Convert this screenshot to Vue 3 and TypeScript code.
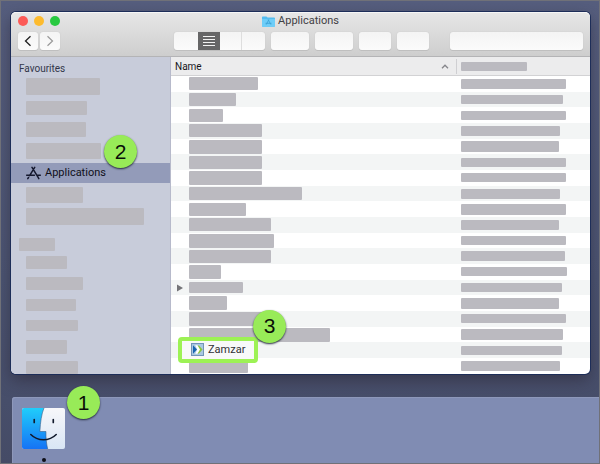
<script setup lang="ts">
interface Bar {
  w: number
  h: number
}
interface FileRow {
  name: Bar | null
  date: Bar
  folder: boolean
}

const favouritesTop: Bar[] = [
  { w: 74, h: 17 },
  { w: 61, h: 14 },
  { w: 60, h: 15 },
  { w: 75, h: 16 },
]
const favouritesBottom: Bar[] = [
  { w: 57, h: 16 },
  { w: 118, h: 17 },
]
const devices: Bar[] = [
  { w: 41, h: 13 },
  { w: 57, h: 13 },
  { w: 50, h: 12 },
  { w: 52, h: 11 },
  { w: 41, h: 14 },
  { w: 52, h: 13 },
]

const row = (nw: number, nh: number, dw: number, dh: number, folder = false): FileRow => ({
  name: nw ? { w: nw, h: nh } : null,
  date: { w: dw, h: dh },
  folder,
})

const files: FileRow[] = [
  row(69, 13, 105, 10),
  row(47, 13, 102, 9),
  row(34, 13, 105, 9),
  row(73, 13, 99, 10),
  row(73, 14, 98, 11),
  row(73, 13, 105, 9),
  row(73, 14, 105, 9),
  row(113, 13, 99, 10),
  row(57, 13, 105, 11),
  row(82, 13, 98, 10),
  row(85, 14, 105, 9),
  row(82, 13, 104, 10),
  row(32, 14, 106, 9),
  row(54, 11, 101, 9, true),
  row(38, 14, 98, 11),
  row(76, 14, 105, 9),
  row(141, 14, 102, 11),
  row(0, 0, 101, 9),
  row(59, 13, 99, 10),
]

const size = (b: Bar) => ({ width: b.w + 'px', height: b.h + 'px' })
</script>

<template>
  <div class="desktop">
    <main class="window">
      <header class="chrome">
        <div class="title-row">
          <div class="lights">
            <button class="light red" aria-label="Close"></button>
            <button class="light amber" aria-label="Minimise"></button>
            <button class="light green" aria-label="Zoom"></button>
          </div>
          <h1 class="title">
            <svg width="13" height="11" viewBox="0 0 13 11" aria-hidden="true">
              <path d="M0 1.2Q0 .4.8.4H4.4L5.6 1.6H12.2Q13 1.6 13 2.4V10Q13 10.8 12.2 10.8H.8Q0 10.8 0 10Z" fill="#55bdf0" />
              <path d="M0 3H13V10Q13 10.8 12.2 10.8H.8Q0 10.8 0 10Z" fill="#6dcdf8" />
              <path d="M6.9 3.5L4.2 8.6M6.1 3.5L8.9 8.6M3.5 7.3H9.5" stroke="#3a9fd3" stroke-width=".8" fill="none" />
            </svg>
            <span>Applications</span>
          </h1>
        </div>
        <div class="toolbar">
          <div class="nav">
            <button class="tool nav-button" aria-label="Back">
              <svg width="8" height="12" viewBox="0 0 8 12"><path d="M6.5 1.2L1.5 6L6.5 10.8" fill="none" stroke="#222" stroke-width="1.3" /></svg>
            </button>
            <button class="tool nav-button" aria-label="Forward">
              <svg width="8" height="12" viewBox="0 0 8 12"><path d="M1.5 1.2L6.5 6L1.5 10.8" fill="none" stroke="#999" stroke-width="1.2" /></svg>
            </button>
          </div>
          <div class="segments">
            <button aria-label="Icon view"></button>
            <button class="on" aria-label="List view">
              <svg width="14" height="10" viewBox="0 0 14 10"><path d="M1 .5H13M1 3.5H13M1 6.5H13M1 9.5H13" stroke="#f2f2f2" stroke-width="1" /></svg>
            </button>
            <button aria-label="Column view"></button>
            <button class="last" aria-label="Gallery view"></button>
          </div>
          <button class="tool wide" aria-label="Group items"></button>
          <button class="tool wide" aria-label="Actions"></button>
          <button class="tool" aria-label="Share"></button>
          <button class="tool" aria-label="Tags"></button>
          <input class="search" type="search" aria-label="Search" />
        </div>
      </header>

      <div class="body">
        <nav class="sidebar">
          <h2>Favourites</h2>
          <ul class="favourites">
            <li v-for="(b, i) in favouritesTop" :key="i"><span class="bar" :style="size(b)"></span></li>
            <li class="selected">
              <a href="#applications">
                <svg width="15" height="14" viewBox="0 0 15 14" aria-hidden="true">
                  <path d="M8.7 1.3L3.6 9.7M6 1.3L12 11.2M.7 9.2H8.4M11 9.2H14.3M2.5 11.5L1.8 12.6M12 11.2L12.8 12.6" fill="none" stroke="#15182e" stroke-width="1.5" stroke-linecap="round" />
                </svg>
                <span>Applications</span>
              </a>
              <span class="badge badge-two">2</span>
            </li>
            <li v-for="(b, i) in favouritesBottom" :key="'b' + i"><span class="bar" :style="size(b)"></span></li>
          </ul>
          <div class="group-heading"><span class="bar"></span></div>
          <ul class="devices">
            <li v-for="(b, i) in devices" :key="i"><span class="bar" :style="size(b)"></span></li>
          </ul>
        </nav>

        <div class="listing">
          <table>
            <thead>
              <tr>
                <th class="name-col" scope="col">
                  <div class="head">
                    <span>Name</span>
                    <svg width="8" height="5" viewBox="0 0 8 5" aria-hidden="true"><path d="M1 4.2L4 1.2L7 4.2" fill="none" stroke="#85858a" stroke-width="1.3" /></svg>
                  </div>
                </th>
                <th class="date-col" scope="col"><div class="date"><span class="bar head-bar"></span></div></th>
              </tr>
            </thead>
            <tbody>
              <tr v-for="(f, i) in files" :key="i">
                <td>
                  <div class="cell">
                    <span class="arrow"><svg v-if="f.folder" width="6" height="8" viewBox="0 0 6 8"><path d="M0 .5L6 4L0 7.5Z" fill="#747478" /></svg></span>
                    <span v-if="f.name" class="bar" :style="size(f.name)"></span>
                    <div v-else class="app">
                      <svg width="13" height="13" viewBox="0 0 13 13" aria-hidden="true">
                        <rect x=".5" y=".5" width="12" height="12" fill="#a9c8e2" stroke="#7195b7" />
                        <path d="M6 2.5H8L11.5 6.5L8 10.5H6L8 6.5Z" fill="#8cc63e" />
                        <path d="M4.2 2.2H6.5L9 6.5L6.5 10.8H4.2L6.2 6.5Z" fill="#fff" />
                        <path d="M2 2.2L6 6.5L2 10.8Z" fill="#1764b0" />
                      </svg>
                      <span>Zamzar</span>
                      <span class="badge badge-three">3</span>
                    </div>
                  </div>
                </td>
                <td><div class="date"><span class="bar" :style="size(f.date)"></span></div></td>
              </tr>
            </tbody>
          </table>
        </div>
      </div>
    </main>

    <footer class="dock">
      <button class="finder" aria-label="Finder">
        <svg width="43" height="41" viewBox="0 0 44 41" preserveAspectRatio="none" aria-hidden="true">
          <defs>
            <linearGradient id="blue" x1="0" y1="0" x2="0" y2="1"><stop offset="0" stop-color="#20cdfb" /><stop offset="1" stop-color="#1673f5" /></linearGradient>
            <linearGradient id="pale" x1="0" y1="0" x2="0" y2="1"><stop offset="0" stop-color="#f7f7fa" /><stop offset="1" stop-color="#d9e6f5" /></linearGradient>
          </defs>
          <rect width="44" height="41" rx="2" fill="url(#pale)" />
          <path d="M2 0H22.5C20 6 18.8 14 18.3 23.5H24.5C24.4 30 25 36 26.3 41H2Q0 41 0 39V2Q0 0 2 0Z" fill="url(#blue)" />
          <path d="M22.5 0C20 6 18.8 14 18.3 23.5H24.5C24.4 30 25 36 26.3 41" fill="none" stroke="#385c87" stroke-width=".6" />
          <path d="M12.5 11.5V14.5M32 11.5V14.5" stroke="#111a2c" stroke-width="1.7" stroke-linecap="round" />
          <path d="M9 26.5C16 33.5 28 33.5 35 26.5" fill="none" stroke="#111a2c" stroke-width="1.6" stroke-linecap="round" />
        </svg>
        <span class="badge badge-one">1</span>
      </button>
      <span class="running"></span>
    </footer>
  </div>
</template>

<style>
body {
  margin: 0;
}
</style>

<style scoped>
* {
  box-sizing: border-box;
}
.desktop {
  display: flex;
  flex-direction: column;
  height: 100vh;
  padding: 11px 0 0 10px;
  border: 1px solid #707178;
  background: linear-gradient(#565e7e, #4b5472 60%, #454b66);
  font-family: Roboto, "Liberation Sans", sans-serif;
  font-size: 11px;
  line-height: 14px;
  color: #17171c;
  overflow: hidden;
}
button {
  padding: 0;
  border: 0;
  font: inherit;
}
svg {
  display: block;
  flex: none;
}
ul,
h1,
h2 {
  margin: 0;
  padding: 0;
  list-style: none;
  font: inherit;
}
.window {
  flex: 1;
  min-height: 0;
  display: flex;
  flex-direction: column;
  margin-right: 9px;
  border-radius: 5px;
  background: #fff;
  box-shadow: 0 0 0 1px #1d2d58, 0 6px 16px rgba(40, 35, 50, 0.55);
}
.chrome {
  height: 45px;
  padding: 0 7px;
  border-top: 1px solid #f6f6f6;
  border-bottom: 1px solid #b4b4b6;
  border-radius: 5px 5px 0 0;
  background: linear-gradient(#e6e6e6, #cecece);
}
.title-row {
  display: grid;
  grid-template-columns: 1fr auto 1fr;
  align-items: center;
  height: 16px;
  margin-bottom: 3px;
}
.lights {
  display: flex;
  gap: 6px;
}
.light {
  width: 10px;
  height: 10px;
  border-radius: 50%;
}
.red {
  background: #fc5b57;
}
.amber {
  background: #fdbb2e;
}
.green {
  background: #28c940;
}
.title {
  display: flex;
  align-items: center;
  gap: 3px;
  color: #414144;
}
.toolbar {
  display: flex;
  gap: 6px;
}
.nav {
  display: flex;
  gap: 2px;
  width: 150px;
}
.tool,
.segments,
.search {
  height: 18px;
  border-radius: 3px;
  background: linear-gradient(#f4f4f4, #fbfbfb);
  box-shadow: 0 0 1px 0 #b2b2b2, 0 1px 0 #c0c0c0;
}
.tool {
  display: grid;
  place-items: center;
  width: 32px;
}
.nav .nav-button {
  width: 20px;
}
.wide {
  width: 38px;
}
.segments {
  display: grid;
  grid-template-columns: 24px 22px 21px 24px;
  overflow: hidden;
}
.segments button {
  display: grid;
  place-items: center;
  background: transparent;
}
.segments .on {
  background: #666667;
}
.segments .last {
  border-left: 1px solid #dedede;
}
.search {
  flex: 1;
  min-width: 0;
  margin: 0 0 0 15px;
  padding: 0 6px;
  border: 0;
  font: inherit;
}
.body {
  flex: 1;
  min-height: 0;
  display: grid;
  grid-template-columns: 160px 1fr;
}
.sidebar {
  min-height: 0;
  overflow: hidden;
  border-right: 1px solid #b7bacb;
  border-radius: 0 0 0 5px;
  background: #c8ccda;
}
.sidebar h2 {
  height: 19px;
  padding: 5px 0 0 8px;
  font-size: 10px;
  color: #33374a;
}
.favourites {
  display: grid;
  grid-auto-rows: 1fr;
  height: 151px;
}
.favourites li,
.devices li {
  display: flex;
  align-items: center;
  padding-left: 15px;
}
.favourites .selected {
  position: relative;
  align-self: center;
  height: 20px;
  background: #939bb9;
}
.selected a {
  display: flex;
  align-items: center;
  gap: 4px;
  color: #101019;
  text-decoration: none;
}
.bar {
  display: block;
  flex: none;
  border-radius: 1px;
  background: #bbbac0;
}
.group-heading {
  padding: 11px 0 1px 8px;
}
.group-heading .bar {
  width: 36px;
  height: 13px;
}
.devices {
  display: grid;
  grid-auto-rows: 21px;
}
.listing {
  min-height: 0;
}
table {
  width: 100%;
  height: 100%;
  border-collapse: collapse;
  table-layout: fixed;
}
th,
td {
  padding: 0;
  text-align: left;
  font-weight: 400;
  line-height: 0;
}
thead tr {
  height: 19px;
  background: #ececed;
  box-shadow: inset 0 -1px #d2d2d4;
}
.date-col {
  width: 133px;
}
.head {
  display: flex;
  align-items: center;
  justify-content: space-between;
  height: 15px;
  padding: 0 7px 0 4px;
  border-right: 1px solid #cfcfd2;
  font-size: 10px;
  line-height: 14px;
}
.head-bar {
  width: 66px;
  height: 9px;
}
.date {
  display: flex;
  align-items: center;
  height: 15px;
  padding-left: 4px;
}
tbody tr:nth-child(even) {
  background: #f3f5f5;
}
.cell {
  position: relative;
  display: flex;
  align-items: center;
  height: 15px;
}
.arrow {
  flex: none;
  width: 18px;
  padding-left: 6px;
}
.app {
  position: absolute;
  z-index: 1;
  left: 7px;
  top: -6px;
  display: flex;
  align-items: center;
  gap: 4px;
  width: 80px;
  height: 26px;
  padding-left: 9px;
  border: 4px solid #9df255;
  border-radius: 4px;
  background: #f8f9f9;
  line-height: 14px;
  color: #303034;
}
.badge {
  position: absolute;
  z-index: 2;
  display: grid;
  place-items: center;
  width: 33px;
  height: 33px;
  border-radius: 50%;
  background: #98eb58;
  box-shadow: 0 1px 2px #23283c;
  color: #0a0f08;
  font-family: "Liberation Sans", sans-serif;
  font-size: 21px;
  line-height: 24px;
}
.badge-one {
  left: 45px;
  top: -22px;
}
.badge-two {
  left: 93px;
  top: -28px;
}
.badge-three {
  left: 71px;
  top: -31px;
}
.dock {
  flex: none;
  display: flex;
  flex-direction: column;
  align-items: flex-start;
  height: 66px;
  margin: 23px 0 0 1px;
  padding: 11px 10px 0;
  border-radius: 3px 0 0 0;
  background: #808cb3;
  box-shadow: inset 1px 1px #8e98ba;
}
.finder {
  position: relative;
  background: transparent;
}
.running {
  width: 4px;
  height: 4px;
  margin: 9px 0 0 20px;
  border-radius: 50%;
  background: #0c0e17;
}
</style>
